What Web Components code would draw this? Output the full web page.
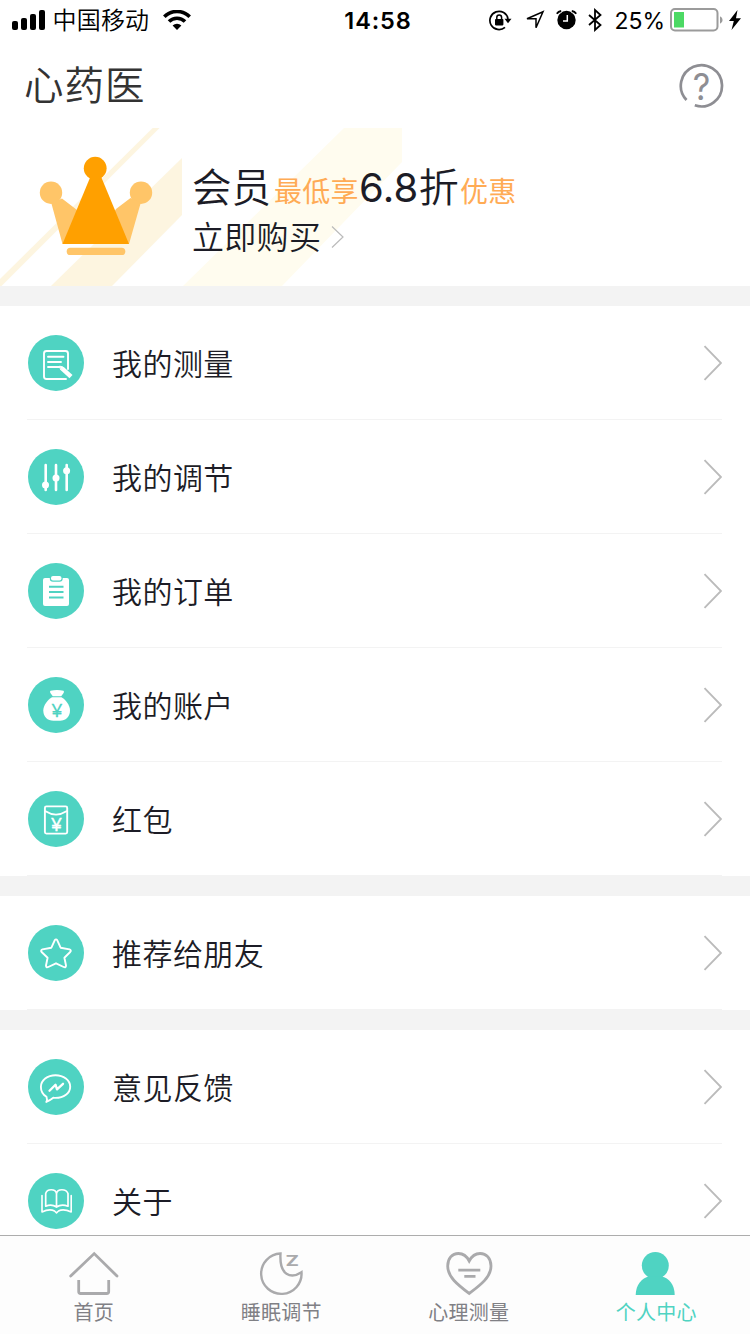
<!DOCTYPE html>
<html lang="zh-CN">
<head>
<meta charset="utf-8">
<title>心药医</title>
<style>
	:root {
		--teal: #4fd3c2;
		--ink: #1c1c26;
		--line: #f3f3f3;
		--gray: #aaaaac;
	}

	body {
		margin: 0;
		background: #fff;
		font-family: Inter, "Noto Sans CJK SC", sans-serif;
		color: var(--ink);
	}
</style>
</head>
<body>
<v-profile></v-profile>

<script>
// small helper, every component here is just a template in an open shadow root
class Base extends HTMLElement {
	constructor() {
		super()
		this.attachShadow({mode: 'open'})
		const template = document.createElement('template')
		template.innerHTML = this.render()
		this.shadowRoot.appendChild(template.content.cloneNode(true))
	}
}

class StatusBar extends Base {
	render() {
		return /*html*/`
			<style>
				:host {
					display: grid;
					grid-template-columns: 1fr auto 1fr;
					align-items: center;
					height: 40px;
					padding: 0 9px 0 12px;
					color: #000;
				}
				div { display: flex; align-items: center; }
				svg { display: block; flex: none; }
				.right { justify-content: flex-end; }
				.carrier { font-size: 24px; line-height: 38px; font-weight: 350; letter-spacing: .2px; margin: 2px 14px 0 6.5px; }
				.time { font-size: 23.5px; font-weight: 600; letter-spacing: .9px; line-height: 38px; padding: 1px 0 0 3px; }
				.percent { font-size: 23px; line-height: 38px; padding-top: 1px; margin: 0 5px 0 11px; }
			</style>
			<div>
				<svg width="34" height="20" viewBox="0 0 34 20">
					<rect x="0" y="11" width="6" height="9" rx="2"/>
					<rect x="9" y="8" width="6" height="12" rx="2"/>
					<rect x="18" y="4" width="6" height="16" rx="2"/>
					<rect x="27" y="0" width="6" height="20" rx="2"/>
				</svg>
				<span class="carrier">中国移动</span>
				<svg width="28" height="20" viewBox="0 0 28 20">
					<path d="M1.3 6.7a18 18 0 0 1 25.4 0M6 11.5a11.3 11.3 0 0 1 16 0" fill="none" stroke="#000" stroke-width="3.6"/>
					<path d="M14 20l-4.4-4.4a6.3 6.3 0 0 1 8.8 0z"/>
				</svg>
			</div>
			<span class="time">14:58</span>
			<div class="right">
				<svg width="23" height="21" viewBox="0 0 23 21">
					<path d="M16 17.3A9.1 9.1 0 1 1 19 9" fill="none" stroke="#000" stroke-width="1.7"/>
					<path d="M15.5 8.8h7l-3.5 4.4z"/>
					<rect x="6" y="9" width="8.4" height="6.4" rx=".8"/>
					<path d="M7.8 9.5V7.4a2.4 2.4 0 0 1 4.8 0v2.1" fill="none" stroke="#000" stroke-width="1.5"/>
				</svg>
				<svg width="20" height="20" viewBox="0 0 20 20" style="margin-left:13px">
					<path d="M2 8.8L18 1.7 11 17.8V8.8z" fill="none" stroke="#000" stroke-width="1.5"/>
				</svg>
				<svg width="21" height="20" viewBox="0 0 21 20" style="margin-left:11px">
					<circle cx="10.5" cy="10" r="9.2"/>
					<path d="M11.3 5v6H7" fill="none" stroke="#fff" stroke-width="1.5"/>
					<path d="M.8 3.8Q2.3 1.4 5.2 1M20.2 3.8Q18.7 1.4 15.8 1" fill="none" stroke="#fff" stroke-width="4"/>
					<path d="M.8 3.8Q2.3 1.4 5.2 1M20.2 3.8Q18.7 1.4 15.8 1" fill="none" stroke="#000" stroke-width="2"/>
				</svg>
				<svg width="16" height="24" viewBox="0 0 16 24" style="margin-left:10.5px">
					<path d="M2 7l11.5 10L8 22V2l5.5 5L2 17" fill="none" stroke="#000" stroke-width="1.8"/>
				</svg>
				<span class="percent">25%</span>
				<svg width="54" height="24" viewBox="0 0 54 24">
					<rect x="1" y="1" width="46.5" height="21.5" rx="4" fill="none" stroke="#9b9b9b" stroke-width="2"/>
					<rect x="4" y="4" width="10" height="15.5" fill="#4cd964"/>
					<path d="M50 8.2q2.6 1 2.6 3.8T50 15.8z" fill="#9b9b9b"/>
				</svg>
				<svg width="12" height="20" viewBox="0 0 12 20" style="margin:0 0 1px 5px">
					<path d="M8.5 0L0 11h4.8L2.5 20 12 8.2H7z"/>
				</svg>
			</div>
		`
	}
}

class TopBar extends Base {
	render() {
		return /*html*/`
			<style>
				:host {
					display: flex;
					align-items: center;
					justify-content: space-between;
					height: 88px;
					padding: 0 26px 0 24px;
					box-sizing: border-box;
				}
				h1 {
					margin: 4px 0 0;
					font-size: 39.5px;
					font-weight: 350;
					line-height: 84px;
					letter-spacing: 1px;
					color: #333;
				}
				svg { display: block; margin-top: 4px; }
			</style>
			<h1><slot></slot></h1>
			<svg width="46" height="46" viewBox="0 0 46 46">
				<path d="M8.5 37A20.6 20.6 0 1 1 16.8 42.3" fill="none" stroke="#8e8e93" stroke-width="2.7"/>
				<text x="23.5" y="36.6" text-anchor="middle" font-family="Inter" font-size="37" textLength="17.5" lengthAdjust="spacingAndGlyphs" fill="#8e8e93">?</text>
			</svg>
		`
	}
}

class VipBanner extends Base {
	render() {
		return /*html*/`
			<style>
				:host { display: grid; height: 158px; overflow: hidden; }
				.art, .copy { grid-area: 1 / 1; }
				.art { display: block; }
				.copy {
					padding: 35px 0 0 192px;
					white-space: nowrap;
					font-weight: 350;
				}
				.offer { display: flex; align-items: baseline; height: 50px; line-height: 50px; font-size: 39.5px; }
				.offer .num { font-size: 40px; letter-spacing: .3px; }
				.offer .num b { font-weight: 400; }
				.offer .hot { font-size: 28px; color: #ffab55; letter-spacing: .3px; font-weight: 400; }
				.buy { display: flex; align-items: center; height: 50px; line-height: 50px; font-size: 32px; letter-spacing: .3px; }
				.buy svg { margin-left: 10px; margin-bottom: 3px; }
			</style>
			<svg class="art" width="402" height="158" viewBox="0 0 402 158">
				<path d="M152.7 0h6.8L1.5 158H0v-7z" fill="#fdf5e0"/>
				<path d="M182 30v57l-70 71H51z" fill="#fdf5e0"/>
				<path d="M344 0h58v34L282 158h-99z" fill="#fffcef"/>
				<g fill="#ffc568">
					<circle cx="51" cy="64.7" r="11.2"/>
					<circle cx="141" cy="64.7" r="11.2"/>
					<path d="M51.3 75L62 70.5l15 11.5L95 116H62.5zM140.7 75L130.5 70 116 81 95 116h34z"/>
					<rect x="66.7" y="119.8" width="58.6" height="7.2" rx="3.6"/>
				</g>
				<g fill="#ffa000">
					<circle cx="95.2" cy="40.2" r="11.4"/>
					<path d="M90.3 49h10.9L129 116H62.5z"/>
				</g>
			</svg>
			<div class="copy">
				<div class="offer"><span>会员</span><span class="hot" style="margin-left:3px">最低享</span><span class="num"><b>6.8</b>折</span><span class="hot" style="margin-left:1px">优惠</span></div>
				<div class="buy">立即购买
					<svg width="14" height="22" viewBox="0 0 14 22"><path d="M1 .5L12 11 1 21.5" fill="none" stroke="#bbb" stroke-width="1.2"/></svg>
				</div>
			</div>
		`
	}
}

// line icons share a 56px disc
const icons = {
	measure: `
		<path d="M40 34V18.5a2.500 2.500 0 0 0-2.500-2.500h-19a2.500 2.500 0 0 0-2.500 2.500v23a2.500 2.500 0 0 0 2.500 2.500H38"/>
		<path d="M20 21.7h15.5M20 27h13M20 32h11.5"/>
		<path d="M34 33.3l9 8.4" stroke-width="4.4" stroke-linecap="butt"/>
		<path d="M32 31.2l3 .8-2.2 2.4z" fill="#fff" stroke-width="1"/>`,
	adjust: `
		<path d="M17.7 16v25M28 16v25M38.7 16v25" stroke-width="2.6"/>
		<g fill="#fff" stroke="none"><circle cx="17.5" cy="36" r="3.5"/><circle cx="28" cy="29" r="3.5"/><circle cx="38.6" cy="21.8" r="3.5"/></g>`,
	order: `
		<rect x="15" y="15" width="26" height="28" rx="2" fill="#fff" stroke="none"/>
		<rect x="23" y="13" width="10.5" height="4.5" rx="2" fill="#fff" stroke="#4fd3c2" stroke-width="2.4" paint-order="stroke"/>
		<path d="M21 23.7h14.5M21 29h14.5M21 34.5h14.5" stroke="#4fd3c2" stroke-width="1.9" stroke-linecap="butt"/>`,
	account: `
		<path d="M22.5 13.8Q29 12.4 35.5 13.8 36.8 15 34.5 17.5L33.2 19.3H24.8L23.5 17.5Q21.2 15 22.5 13.8z" fill="#fff" stroke="none"/>
		<path d="M24 20.2h9.5c4 2.2 8.500 8 8.500 13.300 0 6.500-4.500 10.200-10 10.200h-6.500c-6 0-10.200-3.700-10.200-10.200 0-5.300 4.700-11.100 8.700-13.300z" fill="#fff" stroke="none"/>
		<text x="28.8" y="39.8" text-anchor="middle" font-family="Liberation Sans" font-size="18.5" fill="#4fd3c2" stroke="#4fd3c2" stroke-width=".3">¥</text>`,
	packet: `
		<rect x="16.9" y="15.4" width="22.3" height="27.2" rx="1.5"/>
		<path d="M17.5 20.3q10.5 6.6 21 0"/>
		<text x="28.4" y="39.5" text-anchor="middle" font-family="Liberation Sans" font-size="18.5" fill="#fff" stroke="#fff" stroke-width=".4">¥</text>`,
	star: `<path d="M26.7 15.3Q28 13.4 29.3 15.3L32.6 22.7 41.5 24.4Q43.7 25.2 42.2 27L36.4 32.7 38 40.5Q38 43 35.7 42L28 38.3 20.3 42Q18 43 18 40.5L19.6 32.7 13.6 27Q12.3 25.2 14.5 24.4L23.4 22.7z"/>`,
	feedback: `
		<path d="M18.5 37.8c-3.700-2.200-5.600-5.700-5.600-9.800 0-6.700 6.500-11.800 14.600-11.800S42.200 21.200 42.200 27.700 35.700 38.900 27.600 38.900c-1 0-1.500 0-2.300-.2-2.300 1.800-4.700 3.200-7 4.200.8-1.400 1-3 .2-5.100z"/>
		<path d="M21.5 31.7l6-6 1.500 4.700 6-5.600" stroke-width="2.3"/>`,
	about: `
		<path d="M28.5 34Q23.5 30.5 17.7 33.2V20.5C19 15.500 27.500 15.500 28.500 20.500zQ33.500 30.500 40 33.200V20.500C38 15.500 29.500 15.500 28.500 20.500" stroke-width="1.7"/>
		<path d="M14 22.5V39q7.500-3.600 12.500-1l2 1.800 2-1.800q5-2.600 12.700 1V22.500" stroke-width="1.6"/>`
}

class MenuItem extends Base {
	render() {
		return /*html*/`
			<style>
				:host { display: block; background: #fff; padding: 0 28px 0 27px; }
				div {
					display: flex;
					align-items: center;
					height: 114px;
					padding-left: 1px;
					box-sizing: border-box;
					border-bottom: 1px solid var(--line);
				}
				svg { display: block; flex: none; }
				span { flex: 1; margin: 3px 0 0 28px; font-size: 30px; font-weight: 350; line-height: 44px; letter-spacing: .45px; }
			</style>
			<div>
				<svg width="56" height="56" viewBox="0 0 56 56">
					<circle cx="28" cy="28" r="28" fill="#4fd3c2"/>
					<g fill="none" stroke="#fff" stroke-width="1.9" stroke-linecap="round" stroke-linejoin="round">${icons[this.getAttribute('icon')] || ''}</g>
				</svg>
				<span><slot></slot></span>
				<svg width="19" height="36" viewBox="0 0 19 36"><path d="M1.5 1.2L18 18 1.5 34.8" fill="none" stroke="#bbb" stroke-width="1.9"/></svg>
			</div>
		`
	}
}

class MenuGroup extends Base {
	render() {
		return /*html*/`
			<style>
				:host { display: block; border-top: 20px solid var(--line); }
			</style>
			<slot></slot>
		`
	}
}

const tabIcons = {
	home: `<path d="M1.7 24L25.2 1.6 48 24" stroke-linecap="round"/><path d="M9.7 28v11.5a2 2 0 0 0 2 2h26a2 2 0 0 0 2-2V28"/>`,
	sleep: `<path d="M24.5 1.5A20.2 20.2 0 1 0 45.5 20.2C40.5 23.5 35 24.5 30.5 21.7 25.5 18.5 24 10 24.5 1.5z" stroke-width="2.4"/>
		<text x="36.3" y="13.7" text-anchor="middle" font-family="Inter" font-size="14" font-weight="700" textLength="13.5" lengthAdjust="spacingAndGlyphs" fill="currentColor" stroke="none">Z</text>`,
	heart: `<path d="M25.2 9C22.5 3.7 18.5 1.5 14.5 1.5 8 1.5 3.7 6.5 3.7 14 3.7 25 13.5 32.5 25.2 41.5 37 32.5 47 25 47 14 47 6.5 42.5 1.5 36 1.5c-4 0-8 2.2-10.8 7.5z"/><path d="M14.3 18.2h22M20.3 24.4h11.2"/>`,
	person: `<g fill="currentColor" stroke="none"><circle cx="24.3" cy="13.5" r="13.5"/><path d="M4.7 43C4.7 33 11 25.5 18 24.5h12.5C38 25.5 43.7 33 43.7 43z"/></g>`
}

class TabItem extends Base {
	render() {
		return /*html*/`
			<style>
				:host {
					flex: 1;
					display: flex;
					flex-direction: column;
					align-items: center;
					padding-top: 16px;
					color: #808085;
				}
				svg { display: block; overflow: visible; color: var(--gray); }
				span { font-size: 20px; line-height: 30px; margin-top: 2px; letter-spacing: .2px; }
				:host([active]), :host([active]) svg { color: var(--teal); }
			</style>
			<svg width="50" height="44" viewBox="0 0 50 44">
				<g fill="none" stroke="currentColor" stroke-width="2.8">${tabIcons[this.getAttribute('icon')] || ''}</g>
			</svg>
			<span><slot></slot></span>
		`
	}
}

class TabBar extends Base {
	render() {
		return /*html*/`
			<style>
				:host {
					display: flex;
					flex: none;
					height: 99px;
					box-sizing: border-box;
					background: #fdfdfd;
					border-top: 1px solid #adadad;
				}
			</style>
			<slot></slot>
		`
	}
}

customElements.define('c-status-bar', StatusBar)
customElements.define('c-top-bar', TopBar)
customElements.define('c-vip-banner', VipBanner)
customElements.define('c-menu-item', MenuItem)
customElements.define('c-menu-group', MenuGroup)
customElements.define('c-tab-item', TabItem)
customElements.define('c-tab-bar', TabBar)

class Profile extends Base {
	render() {
		return /*html*/`
			<style>
				:host {
					display: flex;
					flex-direction: column;
					width: 750px;
					height: 1334px;
					overflow: hidden;
				}
				main { flex: 1; min-height: 0; overflow: hidden; }
			</style>
			<c-status-bar></c-status-bar>
			<c-top-bar>心药医</c-top-bar>
			<main>
				<c-vip-banner></c-vip-banner>
				<c-menu-group>
					<c-menu-item icon="measure">我的测量</c-menu-item>
					<c-menu-item icon="adjust">我的调节</c-menu-item>
					<c-menu-item icon="order">我的订单</c-menu-item>
					<c-menu-item icon="account">我的账户</c-menu-item>
					<c-menu-item icon="packet">红包</c-menu-item>
				</c-menu-group>
				<c-menu-group>
					<c-menu-item icon="star">推荐给朋友</c-menu-item>
				</c-menu-group>
				<c-menu-group>
					<c-menu-item icon="feedback">意见反馈</c-menu-item>
					<c-menu-item icon="about">关于</c-menu-item>
				</c-menu-group>
			</main>
			<c-tab-bar>
				<c-tab-item icon="home">首页</c-tab-item>
				<c-tab-item icon="sleep">睡眠调节</c-tab-item>
				<c-tab-item icon="heart">心理测量</c-tab-item>
				<c-tab-item icon="person" active>个人中心</c-tab-item>
			</c-tab-bar>
		`
	}
}

customElements.define('v-profile', Profile)
</script>
</body>
</html>
